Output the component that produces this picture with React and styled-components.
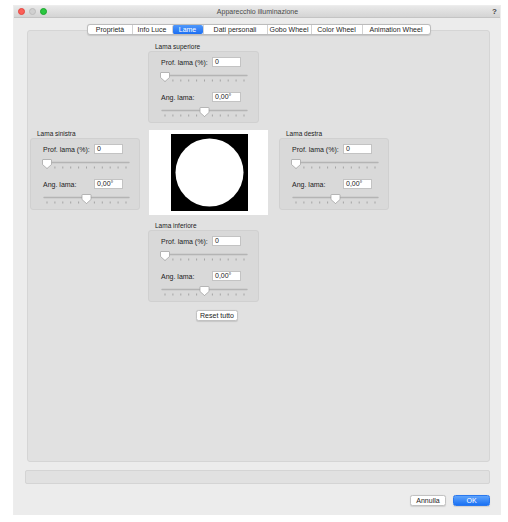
import React from 'react';
import styled, { createGlobalStyle } from 'styled-components';

const GlobalStyle = createGlobalStyle`
  * { box-sizing: border-box; }
  body {
    margin: 0;
    background: #fff;
    font-family: "Liberation Sans", Arial, sans-serif;
    color: #222;
  }
`;

const Window = styled.div`
  margin: 6px 0 0 14px;
  width: 486px;
  height: 509px;
  background: #ececec;
  display: flex;
  flex-direction: column;
  box-shadow: 0 0 0 1px rgba(0, 0, 0, 0.07);
`;

const TitleBar = styled.div`
  height: 12px;
  display: grid;
  grid-template-columns: 1fr auto 1fr;
  align-items: center;
  padding: 0 3px 0 4px;
  background: linear-gradient(#e9e9e9, #d4d4d4);
  border-bottom: 1px solid #c4c4c4;
`;

const Lights = styled.div`
  display: flex;
  gap: 4px;
`;

const Light = styled.span`
  width: 7px;
  height: 7px;
  border-radius: 50%;
  background: ${(p) => p.$bg};
  border: 0.5px solid ${(p) => p.$edge};
`;

const Title = styled.div`
  font-size: 7px;
  color: #4a4a4a;
`;

const Help = styled.div`
  justify-self: end;
  font-size: 8px;
  font-weight: bold;
  color: #444;
  line-height: 8px;
`;

const Body = styled.div`
  flex: 1;
  display: flex;
  flex-direction: column;
  padding: 6px 10px 9px 11px;
`;

const TabView = styled.div`
  margin-left: 2px;
  display: flex;
  flex-direction: column;
`;

const TabBar = styled.div`
  align-self: center;
  display: flex;
  height: 11px;
  margin-bottom: -5px;
  position: relative;
  z-index: 1;
  background: #fff;
  border: 1px solid #bcbcbc;
  border-radius: 3px;
  box-shadow: 0 0.5px 1px rgba(0, 0, 0, 0.12);
`;

const Tab = styled.div`
  width: ${(p) => p.$w}px;
  font-size: 7px;
  line-height: 9px;
  text-align: center;
  white-space: nowrap;
  color: ${(p) => (p.$active ? '#fff' : '#262626')};
  background: ${(p) => (p.$active ? 'linear-gradient(#4f97fa, #1c6ff3)' : 'transparent')};
  border-left: 1px solid ${(p) => (p.$first ? 'transparent' : '#d2d2d2')};
  border-radius: ${(p) => (p.$active ? '2px' : '0')};
`;

const Panel = styled.div`
  height: 432px;
  background: #e1e1e1;
  border: 1px solid #d5d5d5;
  border-radius: 3px;
  padding: 12px 0 0 2px;
  display: grid;
  grid-template-columns: 118px 131px 110px;
  grid-template-areas:
    ". top ."
    "left img right"
    ". bottom ."
    ". reset .";
  row-gap: 7px;
  align-content: start;
  align-items: start;
`;

const Group = styled.div`
  grid-area: ${(p) => p.$area};
  width: ${(p) => p.$w}px;
  display: flex;
  flex-direction: column;
`;

const GroupTitle = styled.div`
  height: 8px;
  line-height: 8px;
  font-size: 6.5px;
  padding-left: 7px;
  color: #222;
`;

const GroupBox = styled.div`
  height: 72px;
  background: #d9d9d9;
  border: 1px solid #d0d0d0;
  border-radius: 3px;
  padding: 5px 0 0 12px;
  display: flex;
  flex-direction: column;
`;

const Field = styled.div`
  display: flex;
  align-items: center;
  height: 10px;
  margin-top: ${(p) => p.$gap || 0}px;
`;

const FieldLabel = styled.span`
  width: 51px;
  font-size: 7px;
  color: #222;
  white-space: nowrap;
`;

const Input = styled.div`
  width: 29px;
  height: 10px;
  background: #fff;
  border: 1px solid #c3c3c3;
  font-size: 7px;
  line-height: 8px;
  padding-left: 2px;
  color: #222;
`;

const SliderSvg = styled.svg`
  display: block;
  margin-left: -1px;
`;

const Preview = styled.div`
  grid-area: img;
  margin-left: 1px;
  width: 119px;
  height: 85px;
  background: #fff;
  display: flex;
  align-items: center;
  justify-content: center;
  padding-left: 2px;
`;

const SmallButton = styled.div`
  height: 11px;
  width: ${(p) => p.$w}px;
  font-size: 7px;
  line-height: 9px;
  text-align: center;
  border-radius: 2.5px;
  background: ${(p) => (p.$primary ? 'linear-gradient(#5ea3fb, #1b72f4)' : '#fff')};
  color: ${(p) => (p.$primary ? '#fff' : '#222')};
  border: 1px solid ${(p) => (p.$primary ? '#2a78ee' : '#c2c2c2')};
  box-shadow: 0 0.5px 1px rgba(0, 0, 0, 0.12);
`;

const ResetButton = styled(SmallButton)`
  grid-area: reset;
  justify-self: start;
  margin: 1px 0 0 48px;
`;

const StatusStrip = styled.div`
  margin-top: 8px;
  height: 14px;
  background: #e1e1e1;
  border: 1px solid #d4d4d4;
  border-radius: 2px;
`;

const Footer = styled.div`
  margin-top: 11px;
  display: flex;
  justify-content: flex-end;
  gap: 7px;
`;

const tabs = [
  ['Proprietà', 44],
  ['Info Luce', 40],
  ['Lame', 31],
  ['Dati personali', 64],
  ['Gobo Wheel', 44],
  ['Color Wheel', 51],
  ['Animation Wheel', 68],
];

function Slider({ value }) {
  const cx = 5 + value * 79;
  const ticks = Array.from({ length: 11 }, (_, i) => 5 + i * 7.9);
  return (
    <SliderSvg width="92" height="18" viewBox="0 0 92 18">
      <line x1="2" y1="8.5" x2="87" y2="8.5" stroke="#b4b4b4" strokeWidth="1.4" strokeLinecap="round" />
      {ticks.map((x) => (
        <line key={x} x1={x} y1="12.5" x2={x} y2="14.5" stroke="#8e8e8e" strokeWidth="0.7" />
      ))}
      <path
        d={`M${cx - 4} 5.5 H${cx + 4} Q${cx + 4.5} 5.5 ${cx + 4.5} 6 V10.5 L${cx} 14.5 L${cx - 4.5} 10.5 V6 Q${cx - 4.5} 5.5 ${cx - 4} 5.5 Z`}
        fill="#fff"
        stroke="#9d9d9d"
        strokeWidth="0.7"
      />
    </SliderSvg>
  );
}

function BladeGroup({ area, title, width }) {
  return (
    <Group $area={area} $w={width}>
      <GroupTitle>{title}</GroupTitle>
      <GroupBox>
        <Field>
          <FieldLabel>Prof. lama (%):</FieldLabel>
          <Input>0</Input>
        </Field>
        <Slider value={0} />
        <Field $gap={7}>
          <FieldLabel>Ang. lama:</FieldLabel>
          <Input>0,00°</Input>
        </Field>
        <Slider value={0.5} />
      </GroupBox>
    </Group>
  );
}

export default function App() {
  return (
    <>
      <GlobalStyle />
      <Window>
        <TitleBar>
          <Lights>
            <Light $bg="#fc5f58" $edge="#e2463f" />
            <Light $bg="#d0d0d0" $edge="#bcbcbc" />
            <Light $bg="#2ac840" $edge="#1aa62c" />
          </Lights>
          <Title>Apparecchio illuminazione</Title>
          <Help>?</Help>
        </TitleBar>
        <Body>
          <TabView>
            <TabBar>
              {tabs.map(([label, w], i) => (
                <Tab key={label} $w={w} $first={i === 0} $active={label === 'Lame'}>
                  {label}
                </Tab>
              ))}
            </TabBar>
            <Panel>
              <BladeGroup area="top" title="Lama superiore" width={111} />
              <BladeGroup area="left" title="Lama sinistra" width={110} />
              <Preview>
                <svg width="77" height="77" viewBox="0 0 77 77">
                  <rect width="77" height="77" fill="#000" />
                  <circle cx="38.5" cy="38.5" r="34" fill="#fff" />
                </svg>
              </Preview>
              <BladeGroup area="right" title="Lama destra" width={110} />
              <BladeGroup area="bottom" title="Lama inferiore" width={111} />
              <ResetButton $w={42}>Reset tutto</ResetButton>
            </Panel>
          </TabView>
          <StatusStrip />
          <Footer>
            <SmallButton $w={36}>Annulla</SmallButton>
            <SmallButton $w={37} $primary>OK</SmallButton>
          </Footer>
        </Body>
      </Window>
    </>
  );
}
